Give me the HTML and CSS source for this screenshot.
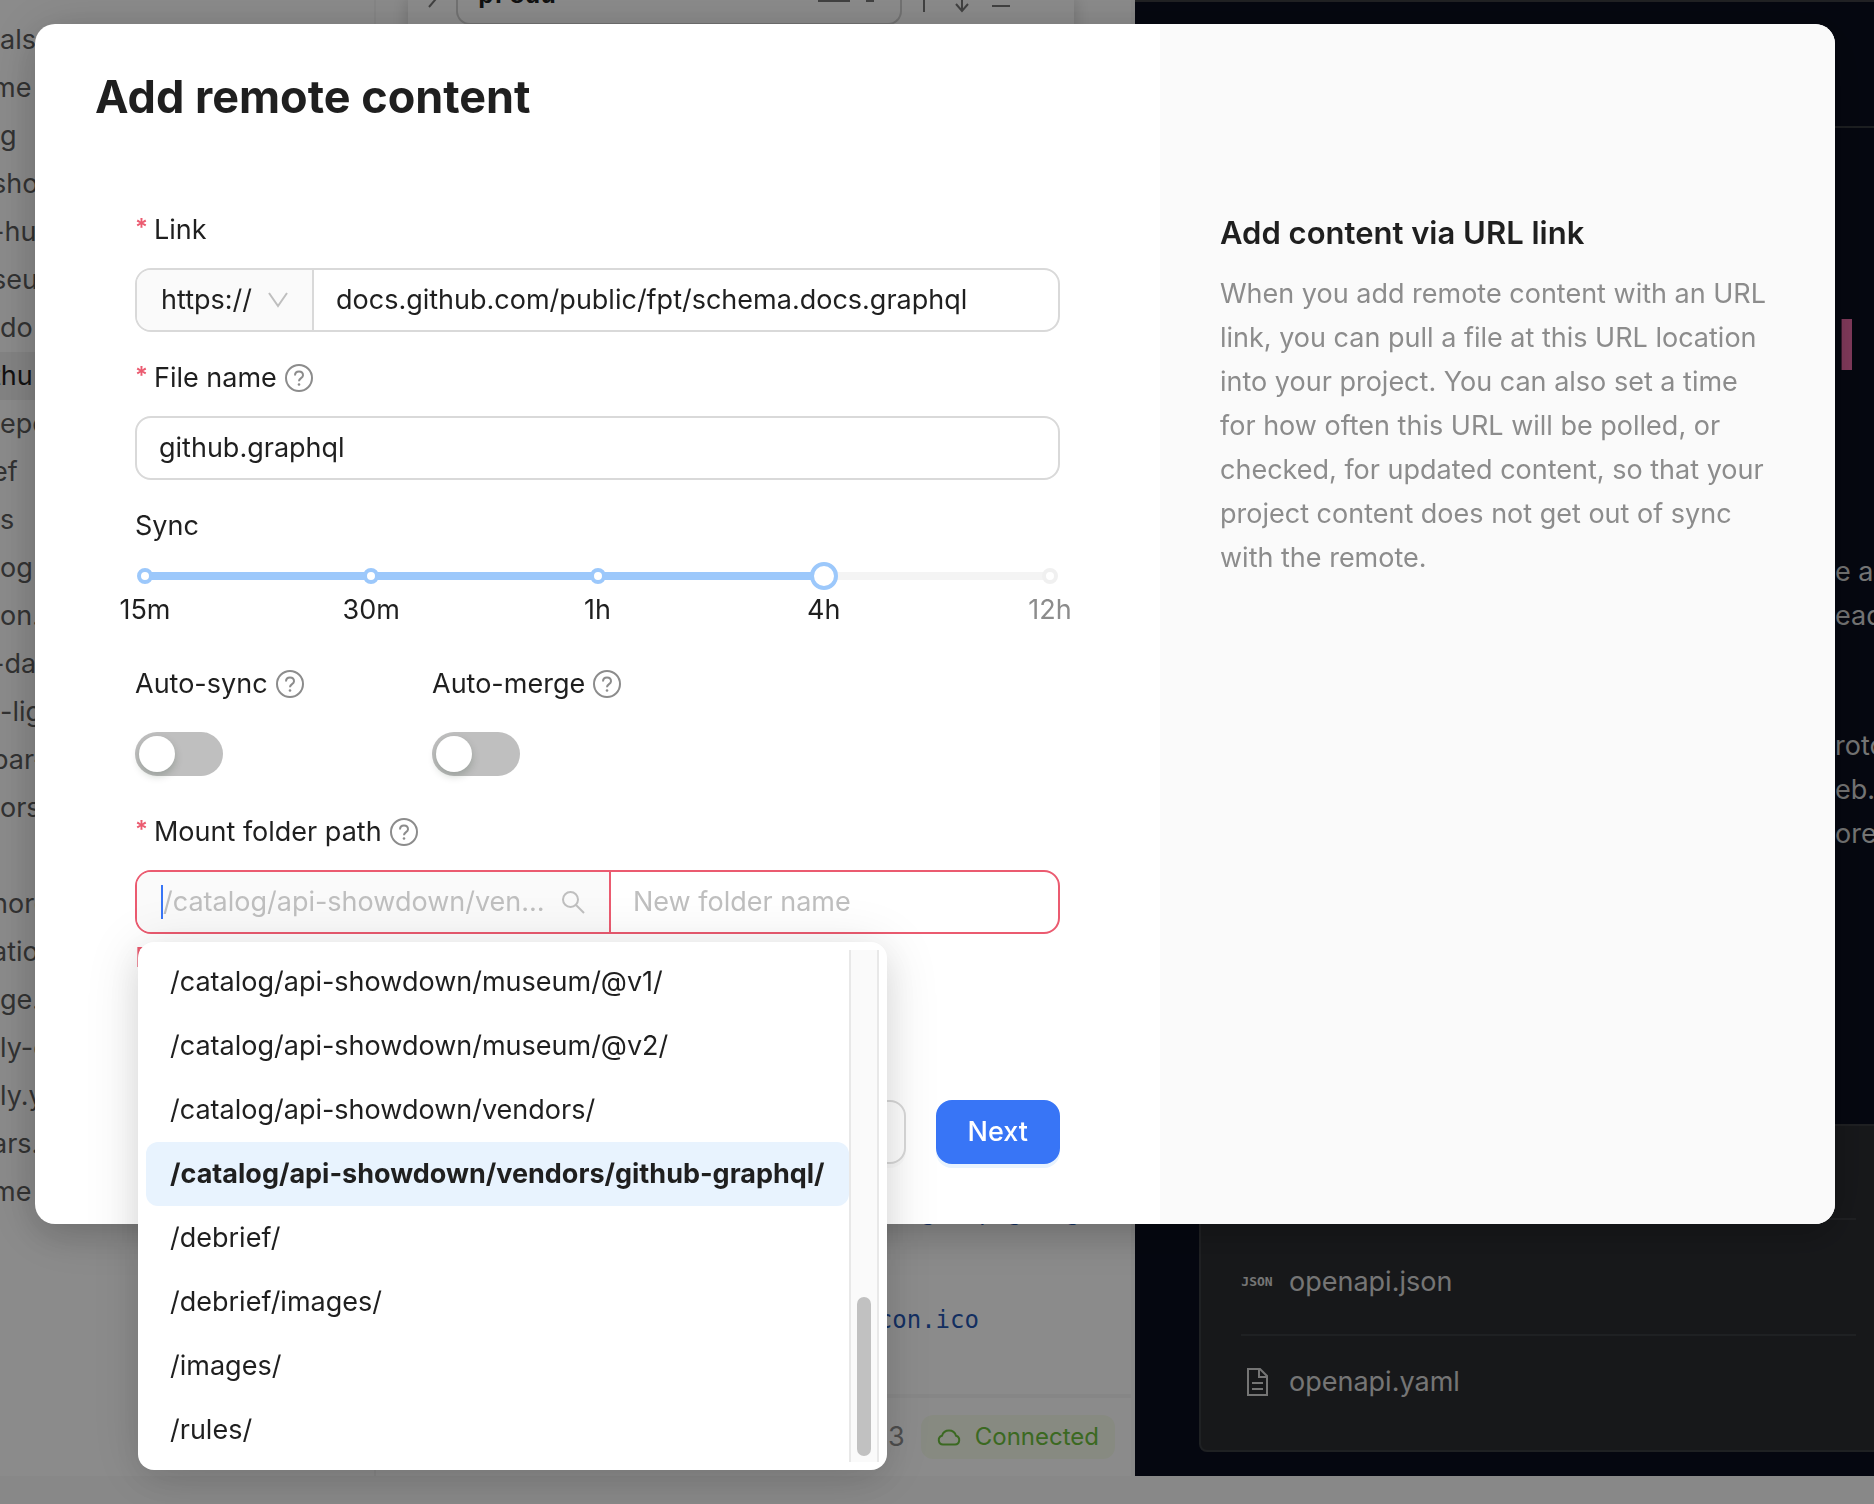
FILE: index.html
```
<!DOCTYPE html>
<html lang="en">
<head>
    <meta charset="utf-8">
    <title>Add remote content</title>
    <link rel="stylesheet" href="styles.css">
</head>
<body>
    <div class="app">
        <nav class="sidebar">
            <ul class="file-tree">
                <li>als</li>
                <li class="scrolled">me</li>
                <li>g</li>
                <li class="scrolled">sho</li>
                <li class="scrolled">-hu</li>
                <li class="scrolled">seu</li>
                <li>do</li>
                <li class="active scrolled">thu</li>
                <li>epo</li>
                <li class="scrolled">ef</li>
                <li>s</li>
                <li>og</li>
                <li>on.</li>
                <li class="scrolled">-da</li>
                <li>-lig</li>
                <li class="scrolled">par-</li>
                <li>ors</li>
                <li></li>
                <li class="scrolled">nore</li>
                <li class="scrolled">atio</li>
                <li>ge.</li>
                <li>ly-c</li>
                <li>ly.y</li>
                <li class="scrolled">ars.</li>
                <li class="scrolled">me</li>
            </ul>
        </nav>
        <div class="editor">
            <div class="find-widget">
                <svg class="find-toggle" viewBox="0 0 16 16"><path d="M5 1l6 7-6 7" fill="none" stroke="currentColor" stroke-width="2"/></svg>
                <div class="find-box"><span>produ</span><i class="find-dash"></i><i class="find-dot"></i></div>
                <svg class="find-arrows" viewBox="0 0 144 24">
                    <path d="M6 0v20M44 0v19M38 12l6 7 6-7M74 14h18M124 7l3-3M142 7l-3-3" fill="none" stroke="currentColor" stroke-width="2"/>
                </svg>
            </div>
            <div class="code">
                <p>src/images/png.svg</p>
                <p>favicon.ico</p>
            </div>
            <div class="status-bar">
                <span>3</span>
                <span class="chip">
                    <svg viewBox="0 0 24 18"><path d="M6 16.500h12a4.500 4.500 0 0 0 1-8.800A7.300 7.300 0 0 0 5 7.700a4.500 4.500 0 0 0 1 8.800z" fill="none" stroke="currentColor" stroke-width="2"/></svg>
                    Connected
                </span>
            </div>
        </div>
        <div class="preview">
            <div class="preview-top"></div>
            <div class="preview-bar"></div>
            <div class="preview-text">
                <h2>I</h2>
                <p>e a<br>ead</p>
                <p>roto<br>eb.<br>ore</p>
            </div>
            <ul class="downloads">
                <li></li>
                <li>
                    <span class="file-type">JSON</span>
                    openapi.json
                </li>
                <li>
                    <svg viewBox="0 0 32 32"><path d="M7 3h12l7 7v19H7zM18 3v8h8M11 17h11M11 23h11" fill="none" stroke="currentColor" stroke-width="2"/></svg>
                    openapi.yaml
                </li>
            </ul>
        </div>
    </div>

    <div class="mask">
        <div class="modal" role="dialog" aria-labelledby="modalTitle">
            <div class="modal-main">
                <h1 id="modalTitle">Add remote content</h1>
                <form class="form">
                    <div class="field">
                        <label class="required" for="link">Link</label>
                        <div class="input-group">
                            <div class="addon">
                                <select class="protocol" aria-label="Protocol">
                                    <option>https://</option>
                                    <option>http://</option>
                                </select>
                                <svg class="chevron" viewBox="0 0 20 20"><path d="M1 3l9 13 9-13" fill="none" stroke="currentColor" stroke-width="2"/></svg>
                            </div>
                            <input id="link" type="text" value="docs.github.com/public/fpt/schema.docs.graphql">
                        </div>
                    </div>

                    <div class="field">
                        <div class="label-row">
                            <label class="required" for="fileName">File name</label>
                            <svg class="help" viewBox="0 0 28 28"><use href="#help"/></svg>
                        </div>
                        <div class="input-group">
                            <input id="fileName" type="text" value="github.graphql">
                        </div>
                    </div>

                    <div class="field">
                        <label for="sync">Sync</label>
                        <div class="slider">
                            <div class="rail"></div>
                            <ol class="marks">
                                <li>15m</li>
                                <li>30m</li>
                                <li>1h</li>
                                <li>4h</li>
                                <li class="off">12h</li>
                            </ol>
                            <input id="sync" type="range" min="0" max="4" step="1" value="3">
                        </div>
                    </div>

                    <div class="switches">
                        <div class="field">
                            <div class="label-row">
                                <label for="autoSync">Auto-sync</label>
                                <svg class="help" viewBox="0 0 28 28"><use href="#help"/></svg>
                            </div>
                            <input id="autoSync" class="switch" type="checkbox">
                        </div>
                        <div class="field">
                            <div class="label-row">
                                <label for="autoMerge">Auto-merge</label>
                                <svg class="help" viewBox="0 0 28 28"><use href="#help"/></svg>
                            </div>
                            <input id="autoMerge" class="switch" type="checkbox">
                        </div>
                    </div>

                    <div class="field mount">
                        <div class="label-row">
                            <label class="required" for="mount">Mount folder path</label>
                            <svg class="help" viewBox="0 0 28 28"><use href="#help"/></svg>
                        </div>
                        <div class="input-group error">
                            <div class="addon search">
                                <i class="caret"></i>
                                <input id="mount" type="text" placeholder="/catalog/api-showdown/vendors/github-graphql/">
                                <svg class="magnifier" viewBox="0 0 24 24"><path d="M15 15l8 8M17 9.500a7.500 7.500 0 1 1-15 0 7.500 7.500 0 0 1 15 0z" fill="none" stroke="currentColor" stroke-width="2"/></svg>
                            </div>
                            <input class="folder" type="text" placeholder="New folder name" aria-label="New folder name">
                        </div>
                        <p class="error-text">Folder is required</p>
                        <div class="dropdown">
                            <ul class="options" role="listbox">
                                <li role="option">/catalog/api-showdown/museum/@v1/</li>
                                <li role="option">/catalog/api-showdown/museum/@v2/</li>
                                <li role="option">/catalog/api-showdown/vendors/</li>
                                <li role="option" class="selected" aria-selected="true">/catalog/api-showdown/vendors/github-graphql/</li>
                                <li role="option">/debrief/</li>
                                <li role="option">/debrief/images/</li>
                                <li role="option">/images/</li>
                                <li role="option">/rules/</li>
                            </ul>
                            <div class="scrollbar"><div class="thumb"></div></div>
                        </div>
                    </div>

                    <div class="actions">
                        <button type="button" class="btn">Back</button>
                        <button type="button" class="btn primary">Next</button>
                    </div>
                </form>
            </div>
            <aside class="modal-info">
                <h2>Add content via URL link</h2>
                <p>When you add remote content with an URL link, you can pull a file at this URL location into your project. You can also set a time for how often this URL will be polled, or checked, for updated content, so that your project content does not get out of sync with the remote.</p>
            </aside>
        </div>
    </div>

    <svg class="defs" width="0" height="0">
        <symbol id="help" viewBox="0 0 28 28">
            <circle cx="14" cy="14" r="13" fill="none" stroke="currentColor" stroke-width="2"/>
            <path d="M10 11.500c0-2.400 1.700-4 4-4s4 1.500 4 3.700c0 3-4 2.800-4 6" fill="none" stroke="currentColor" stroke-width="2"/>
            <circle cx="14" cy="20.500" r="1.300" fill="currentColor"/>
        </symbol>
    </svg>
</body>
</html>
```
FILE: styles.css
```
*, *::before {
    box-sizing: border-box;
}

body {
    margin: 0;
    height: 100vh;
    overflow: hidden;
    font-family: Inter, "Liberation Sans", sans-serif;
    font-size: 27px;
    line-height: 44px;
    color: #1f1f1f;
    background: #f7f7f7;
}

h1, h2, p, ul, ol {
    margin: 0;
    padding: 0;
    list-style: none;
}

input, select, button {
    font: inherit;
    color: inherit;
}

.defs {
    position: absolute;
}

/* Page behind the modal */
.app {
    display: grid;
    grid-template-columns: 376px 759px minmax(0, 1fr);
    height: calc(100vh - 28px);
    background: #fefefe;
}

.sidebar {
    overflow: hidden;
    border-right: 2px solid #f4f4f4;
}

.file-tree {
    padding-top: 16px;
    color: #5c5c5c;
}

.file-tree li {
    height: 48px;
    line-height: 48px;
}

.file-tree .scrolled {
    text-indent: -8px;
}

.file-tree .active {
    background: #efefef;
    color: #1f1f1f;
}

.editor {
    display: flex;
    flex-direction: column;
    border-right: 4px solid #f7f7f7;
}

.find-widget {
    display: flex;
    align-items: start;
    gap: 16px;
    height: 40px;
    margin: 0 57px 0 32px;
    padding-left: 16px;
    color: #777;
    box-shadow: 0 0 16px 2px rgba(0, 0, 0, .16);
}

.find-toggle {
    width: 16px;
    height: 16px;
    margin-top: -8px;
}

.find-box {
    display: flex;
    align-items: start;
    flex: 0 0 446px;
    height: 25px;
    padding: 0 26px 0 20px;
    border: 2px solid #d0d0d0;
    border-top: 0;
    border-radius: 0 0 14px 14px;
    font-family: "Liberation Mono", monospace;
    font-size: 26px;
    font-weight: bold;
    line-height: 32px;
    color: #1f1f1f;
}

.find-box span {
    flex: 1;
    margin-top: -20px;
}

.find-dash, .find-dot {
    width: 32px;
    height: 2px;
    background: #777;
}

.find-dot {
    width: 8px;
    margin-left: 16px;
}

.find-arrows {
    width: 144px;
    height: 24px;
    margin-top: -8px;
}

.code {
    display: flex;
    flex: 1;
    flex-direction: column;
    justify-content: flex-end;
    padding: 0 0 50px 444px;
    font-family: "DejaVu Sans Mono", monospace;
    font-size: 24px;
    line-height: 48px;
    color: #2455b0;
}

.code p + p {
    margin-top: 60px;
}

.status-bar {
    display: flex;
    align-items: center;
    justify-content: flex-end;
    gap: 16px;
    height: 82px;
    padding-right: 16px;
    border-top: 4px solid #f5f5f5;
    color: #8c8c8c;
}

.chip {
    display: flex;
    align-items: center;
    gap: 14px;
    padding: 0 16px;
    border-radius: 12px;
    font-size: 24px;
    color: #6cc03c;
    background: #f6fbec;
}

.chip svg {
    width: 24px;
    height: 18px;
}

.preview {
    display: flex;
    flex-direction: column;
    overflow: hidden;
    color: #d6d6d6;
    background: #0a0e1e;
}

.preview-top {
    height: 2px;
    background: #3c3d42;
}

.preview-bar {
    height: 126px;
    border-bottom: 2px solid #35393d;
}

.preview-text {
    flex: 1;
    padding: 184px 0 0 700px;
}

.preview-text h2 {
    padding-left: 2px;
    font-size: 70px;
    line-height: 66px;
    color: #ee6aa8;
}

.preview-text p {
    margin-top: 172px;
    white-space: nowrap;
}

.preview-text p + p {
    margin-top: 86px;
}

.downloads {
    margin: 0 -24px 24px 64px;
    padding: 0 40px 22px;
    border: 2px solid #3a3c40;
    border-radius: 8px;
    background: #2b2d31;
}

.downloads li {
    display: flex;
    align-items: center;
    gap: 16px;
    height: 94px;
}

.downloads li + li {
    border-top: 2px solid #3a3c40;
}

.downloads li:first-child {
    height: 92px;
}

.downloads li:nth-child(2) {
    height: 116px;
    padding-top: 10px;
}

.downloads svg,
.file-type {
    width: 32px;
    height: 32px;
}

.file-type {
    font-family: "DejaVu Sans Mono", monospace;
    font-size: 13px;
    font-weight: bold;
    line-height: 32px;
    text-align: center;
}

/* Modal */
.mask {
    position: fixed;
    inset: 0;
    padding: 24px 39px 0 35px;
    background: rgba(0, 0, 0, .45);
}

.modal {
    display: grid;
    grid-template-columns: minmax(0, 5fr) minmax(0, 3fr);
    border-radius: 20px;
    background: #fff;
    box-shadow: 0 12px 32px rgba(0, 0, 0, .12), 0 6px 56px rgba(0, 0, 0, .16);
}

.modal-main {
    padding: 40px 100px 60px;
}

.modal-main h1 {
    margin-left: -40px;
    font-size: 45px;
    font-weight: 700;
    line-height: 66px;
}

.form {
    margin-top: 78px;
}

.field {
    margin-bottom: 24px;
}

label {
    display: flex;
    line-height: 44px;
}

.required::before {
    content: "*";
    margin-right: 6px;
    font-size: 24px;
    font-weight: 600;
    line-height: 40px;
    color: #eb5b70;
}

.label-row {
    display: flex;
    align-items: center;
    gap: 8px;
}

.help {
    width: 28px;
    height: 28px;
    color: #8c8c8c;
}

.input-group {
    display: flex;
    height: 64px;
    margin-top: 16px;
    overflow: hidden;
    border: 2px solid #d9d9d9;
    border-radius: 16px;
    background: #fff;
}

.input-group input {
    flex: 1;
    min-width: 0;
    padding: 0 22px;
    border: 0;
    outline: 0;
    background: transparent;
    text-overflow: ellipsis;
}

.input-group input::placeholder {
    color: #bfbfbf;
}

.addon {
    display: flex;
    align-items: center;
    gap: 16px;
    min-width: 0;
    padding: 0 24px;
    border-right: 2px solid #d9d9d9;
    background: #fafafa;
}

.protocol {
    padding: 0;
    border: 0;
    outline: 0;
    appearance: none;
    background: transparent;
}

.chevron {
    width: 20px;
    height: 20px;
    color: #bfbfbf;
}

.input-group.error,
.error .addon {
    border-color: #eb5b70;
}

.addon.search {
    flex: 0 0 474px;
    gap: 0;
}

.addon.search input {
    padding: 0 16px 0 0;
}

.caret {
    width: 2px;
    height: 34px;
    background: #3875f6;
}

.magnifier {
    width: 24px;
    height: 24px;
    color: #bfbfbf;
}

/* Sync slider, marks overhang the form by half a mark */
.slider {
    position: relative;
    height: 90px;
    margin: 0 -30px;
}

.rail {
    position: absolute;
    top: 24px;
    left: 40px;
    right: 40px;
    height: 8px;
    background: linear-gradient(to right, #9cc8fb 75%, #f4f4f4 75%);
}

.marks {
    position: absolute;
    inset: 0;
    display: flex;
    justify-content: space-between;
}

.marks li {
    width: 80px;
    padding-top: 20px;
    text-align: center;
}

.marks li::before {
    content: "";
    display: block;
    width: 16px;
    height: 16px;
    margin: 0 auto 4px;
    border: 4px solid #9cc8fb;
    border-radius: 50%;
    background: #fff;
}

.marks .off {
    color: #8c8c8c;
}

.marks .off::before {
    border-color: #f0f0f0;
}

.slider input {
    position: absolute;
    top: 14px;
    left: 26px;
    width: calc(100% - 52px);
    height: 28px;
    margin: 0;
    appearance: none;
    background: transparent;
}

.slider input::-webkit-slider-thumb {
    width: 28px;
    height: 28px;
    box-sizing: border-box;
    appearance: none;
    border: 4px solid #9cc8fb;
    border-radius: 50%;
    background: #fff;
}

.switches {
    display: flex;
}

.switches .field {
    width: 297px;
}

.switch {
    display: block;
    width: 88px;
    height: 44px;
    margin: 26px 0 10px;
    padding: 4px;
    appearance: none;
    border-radius: 22px;
    background: #bfbfbf;
}

.switch::before {
    content: "";
    display: block;
    width: 36px;
    height: 36px;
    border-radius: 50%;
    background: #fff;
    box-shadow: 0 4px 8px rgba(0, 35, 11, .2);
}

.mount {
    position: relative;
    margin-bottom: 0;
}

.error-text {
    margin-top: 2px;
    color: #eb5b70;
}

.dropdown {
    position: absolute;
    top: 132px;
    left: 3px;
    display: flex;
    width: 749px;
    padding: 8px;
    border-radius: 16px;
    background: #fff;
    box-shadow: 0 12px 32px rgba(0, 0, 0, .08), 0 6px 56px rgba(0, 0, 0, .12);
}

.options {
    flex: 1;
}

.options li {
    padding: 10px 24px;
    border-radius: 12px;
    white-space: nowrap;
}

.options .selected {
    font-weight: 700;
    background: #e8f3fe;
}

.scrollbar {
    display: flex;
    align-items: flex-end;
    width: 30px;
    padding: 0 6px 6px;
    border: solid #e8e8e8;
    border-width: 0 2px;
    background: #fafafa;
}

.thumb {
    width: 16px;
    height: 159px;
    border-radius: 8px;
    background: #c1c1c1;
}

.actions {
    display: flex;
    justify-content: flex-end;
    gap: 30px;
    margin-top: 120px;
}

.btn {
    height: 64px;
    padding: 0 30px;
    border: 2px solid #d9d9d9;
    border-radius: 16px;
    background: #fff;
    box-shadow: 0 4px 0 rgba(0, 0, 0, .02);
}

.btn.primary {
    border-color: #3875f6;
    font-weight: 500;
    color: #fff;
    background: #3875f6;
    box-shadow: 0 4px 0 #e8f3fe;
}

.modal-info {
    padding: 186px 60px 60px;
    border-radius: 0 20px 20px 0;
    background: #fafafa;
}

.modal-info h2 {
    font-size: 31px;
    font-weight: 600;
    line-height: 46px;
}

.modal-info p {
    margin-top: 16px;
    color: #8c8c8c;
}
```
